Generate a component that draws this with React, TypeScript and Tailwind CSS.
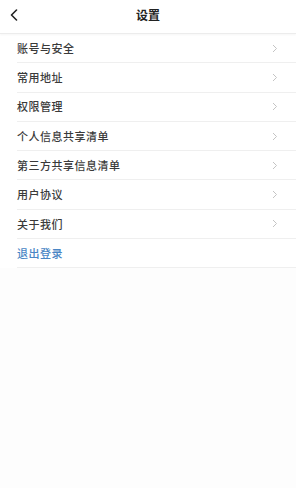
import { FC } from 'react';

const items = ['账号与安全', '常用地址', '权限管理', '个人信息共享清单', '第三方共享信息清单', '用户协议', '关于我们'];

const Chevron: FC = () => (
  <svg width="6" height="9" viewBox="0 0 6 9" fill="none">
    <path d="M1 1l3.5 3.5L1 8" stroke="#c4c4c4" strokeWidth="1" />
  </svg>
);

const App: FC = () => {
  return (
    <div
      className="w-[296px] h-[488px] bg-[#fdfdfd] text-[#3a3a3a] overflow-hidden"
      style={{ fontFamily: '"Noto Sans CJK SC", "Noto Sans", sans-serif' }}
    >
      <div className="h-[34px] flex items-center relative bg-white border-b border-[#ececec] shadow-[0_1px_2px_rgba(0,0,0,0.04)]">
        <button type="button" className="pl-[10px] pr-2 h-full flex items-center -mt-[4px]">
          <svg width="8" height="12" viewBox="0 0 8 12" fill="none">
            <path d="M6.5 1L1.5 6l5 5" stroke="#222" strokeWidth="1.6" strokeLinecap="round" strokeLinejoin="round" />
          </svg>
        </button>
        <p className="absolute left-1/2 -translate-x-1/2 top-[6px] text-[12px] font-bold text-[#222]">设置</p>
      </div>
      <ul className="bg-white">
        {items.map((item) => (
          <li key={item} className="ml-[17px] h-[29.3px] flex items-center justify-between pr-[18px] border-b border-[#efefef]">
            <span className="text-[11px] font-medium tracking-[0.5px]">{item}</span>
            <Chevron />
          </li>
        ))}
        <li className="ml-[17px] h-[29.3px] flex items-center border-b border-[#efefef]">
          <span className="text-[11px] font-medium tracking-[0.5px] text-[#4a86c5]">退出登录</span>
        </li>
      </ul>
    </div>
  );
};

export default App;
